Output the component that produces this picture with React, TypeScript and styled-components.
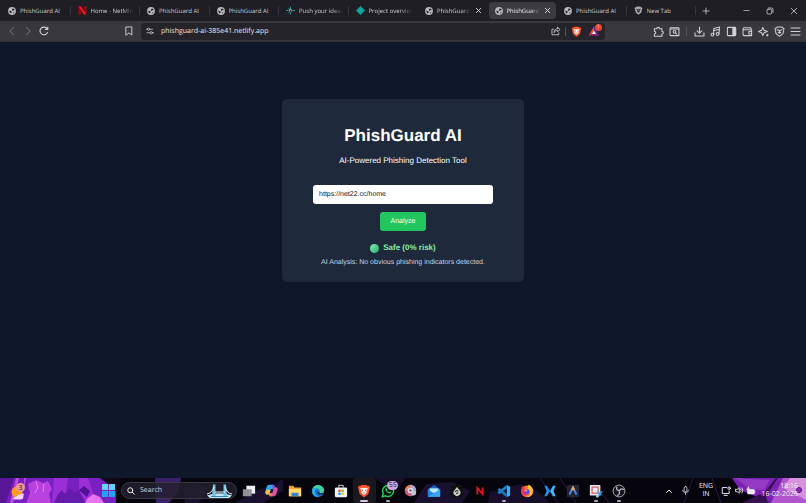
import React, { useState } from "react";
import styled, { createGlobalStyle, css } from "styled-components";

const GlobalStyle = createGlobalStyle`
  * { box-sizing: border-box; }
  html, body, #root { height: 100%; }
  body { margin: 0; background: #0f172a; overflow: hidden; text-rendering: geometricPrecision; }
  button, input { font: inherit; color: inherit; border: 0; background: none; padding: 0; margin: 0; outline: none; text-rendering: inherit; }
  svg { display: block; flex: none; }
`;

const uiFont = `"Open Sans", "Noto Sans", sans-serif`;

const Screen = styled.div`
  display: flex;
  flex-direction: column;
  min-height: 100vh;
  font-family: ${uiFont};
`;

/* ---------- tab strip ---------- */

const TabStrip = styled.header`
  display: flex;
  align-items: center;
  height: 21px;
  background: #1f1e24;
  color: #cdcdd2;
  font-size: 6px;
`;

const Tabs = styled.nav`
  flex: 1;
  min-width: 0;
  display: grid;
  grid-template-columns: repeat(10, minmax(0, 1fr));
  height: 100%;
  padding-left: 1px;
`;

const TabCell = styled.div<{ $active?: boolean; $divider?: boolean }>`
  display: flex;
  align-items: center;
  gap: 4px;
  height: 17px;
  margin: 2px 1px;
  padding: 0 5px 0 6px;
  border-radius: 4px;
  position: relative;
  ${(p) => p.$active && css`background: #3b3b41; color: #f0f0f2;`}
  ${(p) =>
    p.$divider &&
    css`
      &::after {
        content: "";
        position: absolute;
        right: -1px;
        top: 4px;
        height: 9px;
        width: 1px;
        background: #37363d;
      }
    `}
`;

const TabTitle = styled.button<{ $fade?: boolean }>`
  flex: 1;
  min-width: 0;
  overflow: hidden;
  white-space: nowrap;
  text-align: left;
  line-height: 12px;
  ${(p) => p.$fade && css`mask-image: linear-gradient(90deg, #000 72%, transparent);`}
`;

const IconButton = styled.button<{ $w?: number; $dim?: boolean }>`
  display: flex;
  align-items: center;
  justify-content: center;
  flex: none;
  width: ${(p) => p.$w ?? 16}px;
  height: 16px;
  opacity: ${(p) => (p.$dim ? 0.45 : 1)};
`;

const CloseButton = styled(IconButton)`
  width: 7px;
  color: #e6e6ea;
`;

const WindowControls = styled.div`
  display: flex;
  width: 110px;
  flex: none;
  justify-content: space-between;
  color: #d8d8dc;
`;

const ControlGroup = styled.div`
  display: flex;
`;

/* ---------- address row ---------- */

const Toolbar = styled.div`
  display: flex;
  align-items: center;
  height: 21px;
  padding: 0 3px 0 4px;
  background: #38383e;
  color: #d0d0d5;
  border-bottom: 1px solid #323339;
`;

const NavButtons = styled.div`
  display: flex;
  flex: 1 1 113px;
`;

const AddressBar = styled.form`
  display: flex;
  align-items: center;
  flex: 4 1 464px;
  height: 17px;
  padding: 0 2px;
  border-radius: 4px;
  background: #25242a;
`;

const AddressInput = styled.input`
  flex: 1;
  min-width: 0;
  margin-left: 5px;
  height: 15px;
  font-size: 7px;
  color: #e8e8ec;
`;

const Separator = styled.span<{ $gap?: number }>`
  width: 1px;
  height: 9px;
  margin: 0 ${(p) => p.$gap ?? 1}px;
  background: #55555b;
`;

const Extensions = styled.div`
  display: flex;
  align-items: center;
  justify-content: flex-end;
  flex: 1 1 198px;
`;

const BadgeHolder = styled.span`
  position: relative;
  display: flex;
`;

const AlertBadge = styled.span`
  position: absolute;
  right: -2px;
  top: -1px;
  width: 7px;
  height: 7px;
  border-radius: 50%;
  background: #f2452f;
  color: #ffd6cf;
  font-size: 5px;
  line-height: 7px;
  text-align: center;
`;

/* ---------- page ---------- */

const Page = styled.main`
  flex: 1;
  display: flex;
  justify-content: center;
  align-items: flex-start;
  padding-top: 57px;
  background: #0f172a;
  color: #fff;
  font-family: "Liberation Sans", Arial, sans-serif;
`;

const Card = styled.section`
  display: flex;
  flex-direction: column;
  align-items: center;
  width: 30%;
  min-width: 240px;
  padding: 26px 16px 13px;
  border-radius: 5px;
  background: #1e293b;
`;

const Title = styled.h1`
  margin: 0;
  font-size: 17px;
  line-height: 22px;
`;

const Subtitle = styled.p`
  margin: 8px 0 18px;
  font-size: 8px;
  line-height: 12px;
`;

const CheckForm = styled.form`
  display: flex;
  flex-direction: column;
  align-items: center;
  gap: 8px;
  width: 100%;
`;

const LinkInput = styled.input`
  box-sizing: content-box;
  width: 80%;
  height: 19px;
  padding: 0 6px;
  border-radius: 3px;
  background: #fff;
  color: #16161a;
  font-size: 7px;
`;

const AnalyzeButton = styled.button`
  height: 19px;
  padding: 0 11px;
  border-radius: 3px;
  background: #22c55e;
  color: #fff;
  font-size: 7px;
`;

const Verdict = styled.p`
  display: flex;
  align-items: center;
  gap: 4px;
  margin: 11px 0 3px;
  color: #86efac;
  font-size: 8px;
  font-weight: bold;
  line-height: 12px;
`;

const Analysis = styled.p`
  margin: 0;
  color: #cbd5e1;
  font-size: 7px;
  line-height: 12px;
  white-space: nowrap;
`;

const StatusDot = styled.span`
  width: 9px;
  height: 9px;
  border-radius: 50%;
  background: linear-gradient(135deg, #9af0bd, #4fd08c 50%, #2fa36b);
`;

/* ---------- taskbar ---------- */

const Taskbar = styled.footer`
  position: relative;
  display: flex;
  align-items: center;
  height: 25px;
  overflow: hidden;
  background: #06050d;
  color: #f0f0f5;
  font-size: 7px;
`;

const Wallpaper = styled.svg`
  position: absolute;
  inset: 0;
  width: 100%;
  height: 100%;
`;

const TaskLayer = styled.div`
  position: relative;
  flex: 1;
  display: flex;
  align-items: center;
  height: 100%;
`;

const Widgets = styled.div`
  width: 97px;
  padding-left: 8px;
`;

const SearchBox = styled.label`
  display: flex;
  align-items: center;
  gap: 5px;
  width: 116px;
  height: 17px;
  margin-left: 1px;
  padding: 0 3px 0 5px;
  border: 1px solid #3a3744;
  border-radius: 9px;
  background: #24212fcc;
`;

const SearchInput = styled.input`
  flex: 1;
  min-width: 0;
  &::placeholder { color: #d4d2dc; opacity: 1; }
`;

const Apps = styled.div`
  flex: 1;
  display: grid;
  grid-template-columns: repeat(17, minmax(0, 1fr));
  height: 100%;
`;

const AppButton = styled.button<{ $running?: boolean; $active?: boolean }>`
  position: relative;
  display: flex;
  align-items: center;
  justify-content: center;
  height: 100%;
  border-radius: 3px;
  ${(p) => p.$active && css`background: #ffffff14;`}
  ${(p) =>
    (p.$running || p.$active) &&
    css`
      &::after {
        content: "";
        position: absolute;
        bottom: 1px;
        width: ${p.$active ? 8 : 4}px;
        height: 2px;
        border-radius: 1px;
        background: ${p.$active ? "#d6bfe0" : "#a9a6b2"};
      }
    `}
`;

const CountBadge = styled.span`
  position: absolute;
  right: 1px;
  top: 3px;
  width: 11px;
  height: 9px;
  border-radius: 5px;
  background: #c9a6dd;
  color: #2a1838;
  font-size: 7px;
  line-height: 9px;
  text-align: center;
`;

const Tray = styled.div`
  display: flex;
  align-items: center;
  width: 175px;
  height: 100%;
  padding: 0 8px 0 30px;
`;

const Language = styled.button`
  width: 26px;
  line-height: 8px;
  font-size: 7px;
  text-align: center;
`;

const Clock = styled.time`
  flex: 1;
  min-width: 0;
  display: flex;
  flex-direction: column;
  align-items: flex-end;
  white-space: nowrap;
  line-height: 8px;
`;

/* ---------- icons ---------- */

type SvgProps = { size?: number; children: React.ReactNode; w?: number; box?: string };
const Line = ({ size = 10, children, w = 1.5 }: SvgProps) => (
  <svg width={size} height={size} viewBox="0 0 16 16" fill="none" stroke="currentColor" strokeWidth={w} strokeLinecap="round" strokeLinejoin="round" aria-hidden>
    {children}
  </svg>
);
const Art = ({ size = 14, children, box = "0 0 16 16" }: SvgProps) => (
  <svg width={size} height={size} viewBox={box} aria-hidden>
    {children}
  </svg>
);

const Globe = () => (
  <Art size={8}>
    <circle cx="8" cy="8" r="7.8" fill="#b9b9be" />
    <path d="M2.500 7 5 8l2 .500V11L6 13 3.500 11ZM9 3l3 .500 1.500 2.500-2.500.500-2 1.500-1.500-1.500L8.500 5ZM10.500 11l2.500-1-.7 2-1.800 1Z" fill="#26252b" />
  </Art>
);
const NetMirror = () => (
  <Art size={9}>
    <path d="M1 1h4v14l-4 1ZM11 0h4v15l-4 .4Z" fill="#a8060e" />
    <path d="M1 1h4.500L15 15.300h-4.700Z" fill="#ed1c24" />
  </Art>
);
const NetlifySpark = () => (
  <Art size={9}>
    <path d="M8 1v4M8 11v4M0 8h4M12 8h4M3.800 4l1.500 1.500M3.800 12l1.500-1.500" stroke="#2ea6a4" strokeWidth="1.500" />
    <path d="M6 10V6h3.200l1 1v3" fill="none" stroke="#a4dcd8" strokeWidth="1.500" />
  </Art>
);
const NetlifyDiamond = () => (
  <Art size={9}>
    <path d="M8 .5 15.500 8 8 15.500.5 8Z" fill="#12a59c" stroke="#12a59c" strokeLinejoin="round" />
  </Art>
);
const shieldPath = "M5 1h6l1.300 1.300 1.500-.2 1.200 2-.6 1.400L13 11.500 8 15.500 3 11.500 1.600 5.500 1 4.100l1.200-2 1.500.2Z";
const BraveGrey = () => (
  <Art size={9}>
    <path d={shieldPath} fill="#a5a5ab" />
    <path d="m4 5 2.500.6L8 5l1.500.600L12 5l-1.500 3-.3 2L8 12l-2.200-2-.3-2Z" fill="#34333a" />
    <path d="M8 6.500v2.500" stroke="#a5a5ab" />
  </Art>
);
const Brave = ({ size = 11 }: { size?: number }) => (
  <Art size={size}>
    <path d={shieldPath} fill="#fb542b" />
    <path d="M3.500 5 6.400 4.200 8 4.700l1.600-.5L12.500 5l-1.800 3.300.5 1.500L8 12.700 4.800 9.800l.5-1.500Z" fill="#fff" />
    <path d="m4.800 6 2 .7.200 1.600L6 8ZM11.200 6l-2 .7L9 8.300l1-.3ZM6.700 10 8 9.500l1.300.5L8 11Z" fill="#fb542b" />
  </Art>
);
const BatTriangle = () => (
  <Art size={12}>
    <path d="M8 2 1 14h14Z" fill="#5a2ca0" />
    <path d="M8 2 1 14l7-4.500Z" fill="#ff4724" />
    <path d="M1 14h14L8 9.500Z" fill="#9e1f63" />
    <path d="M8 7.500 5.200 12h5.600Z" fill="#fff" />
  </Art>
);
const CloseIcon = ({ size = 7 }: { size?: number }) => (
  <Line size={size} w={2}><path d="m3 3 10 10M13 3 3 13" /></Line>
);

const Puzzle = () => (
  <Line size={11}><path d="M2 4h3.500a2 2 0 1 1 4 0H13v3.500a2 2 0 1 1 0 4V15H2v-3.500a2 2 0 1 0 0-4Z" /></Line>
);
const PageSearch = () => (
  <Line size={11}><rect x="1.500" y="2.500" width="13" height="11.500" rx="1" /><path d="M2 4.500h12" /><circle cx="8" cy="8.500" r="2" /><path d="m9.500 10 2 2" /></Line>
);
const Download = () => (
  <Line size={11}><path d="M8 1.500v9M4.500 7 8 10.500 11.500 7M1.500 10v4.500h13V10" /></Line>
);
const Music = () => (
  <Line size={11}><circle cx="3.500" cy="12.500" r="2" /><circle cx="11" cy="11.500" r="2" /><path d="M5.500 12.500v-9L14 1.500l-1 10M5.500 6.500 13 5" /></Line>
);
const SidePanel = () => (
  <Line size={11}><rect x="2" y="2" width="12" height="12" rx="1" /><path d="M10 2.500h4v11h-4Z" fill="currentColor" /></Line>
);
const Wallet = () => (
  <Line size={11}><path d="M13 5V2.500H3A1.500 1.500 0 0 0 3 5.500h11V14H3a1.500 1.500 0 0 1-1.500-1.500V4M14 8h-4v3.500h4" /></Line>
);
const Sparkle = () => (
  <Line size={11}><path d="M7 2 8.800 6.200 13.500 8 8.800 9.800 7 14 5.200 9.800.8 8l4.400-1.800ZM13.500 12v2.500M12.300 13.200h2.500" /></Line>
);
const ShieldLine = () => (
  <Line size={11}><path d="M4.500 1.500h7L14.500 4 13 11 8 15 3 11 1.500 4Z" /><path d="M4.500 5.500 8 6.500l3.500-1M6 9l2 1.500L10 9M8 6.500v4" /></Line>
);
const Share = () => (
  <Line size={10} w={1.3}><path d="M4 5H1.500v9h11V11M10.500 2l4 3.500-4 3.500V7C8 7 6 8 5 10.500 5 7 7 4.300 10.500 4Z" /></Line>
);

const WindowsLogo = () => (
  <Art size={13}>
    <path d="M0 0h7.500v7.500H0ZM8.500 0H16v7.500H8.500Z" fill="#62d3f8" />
    <path d="M0 8.500h7.500V16H0ZM8.500 8.500H16V16H8.500Z" fill="#22a4ee" />
  </Art>
);
const WidgetArt = () => (
  <svg width="20" height="20" viewBox="0 0 20 20" aria-hidden>
    <circle cx="9" cy="11" r="5.500" fill="#ff9a1f" />
    <path d="M5 17.500c1-2 3-1 4-2.500 2-2 4-2 7-2.500-1 3 0 6-3 6H6Z" fill="#f0d3f5" />
    <circle cx="12.500" cy="6.500" r="4.500" fill="#f09a94" />
    <text x="12.500" y="9" fontSize="7" textAnchor="middle" fill="#401522">3</text>
  </svg>
);
const BridgeArt = () => (
  <svg width="27" height="15" viewBox="0 0 27 15" aria-hidden>
    <path d="M1 12.500Q13 8 26 12.500L23 15H4Z" fill="#bfe7f2" />
    <path d="M7 1.500h2.500V13H6ZM17.500 1.500H20l1 11.500h-3.500Z" fill="#79bfe0" />
    <path d="M1 11Q6 10 8 4M19 4q2 6.500 7 7M8.500 9h10.500" fill="none" stroke="#e4f7fc" />
    <path d="M5 13.500h17" stroke="#3c83a8" />
  </svg>
);

const TaskView = () => (
  <Art><path d="M5 2h10v9H5Z" fill="#efeff2" /><path d="M1 6h10v8H1Z" fill="#8f8f98" /></Art>
);
const Copilot = () => (
  <Art size={13}>
    <path d="M5 1h5l2 5H7L5 13H3C0 13 0 10 1 7l1-3c.500-2 1.500-3 3-3Z" fill="#28a8ea" />
    <path d="M2 7h5l-2 6H3C0 13 0 10 2 7Z" fill="#f3c53c" />
    <path d="M11 15H6L4 11h5l2-7h2c3 0 3 3 2 5l-1 3c-.500 2-1.500 3-3 3Z" fill="#d952a2" />
    <path d="M8.500 1H10c1.500 0 2 1 2.500 3H11L10 8Z" fill="#7457e0" />
    <path d="M4 11h5l-1 4H6Z" fill="#f58242" />
  </Art>
);
const Folder = () => (
  <Art><path d="M1 2h5l1.500 2H15v10H1Z" fill="#e9a52a" /><path d="M1 5.500h14V14H1Z" fill="#ffd866" /><path d="M4 10h8v4H4Z" fill="#3684d1" /></Art>
);
const Edge = () => (
  <Art>
    <circle cx="8" cy="8" r="7" fill="#1277cf" />
    <path d="M1.200 7C2 3 5 1 8 1c4 0 7 3 7 6 0 3-3 4-5.500 3 1.500-3-1-5-3.500-5-2 0-4 .8-4.800 2Z" fill="#42cfa0" />
    <path d="M1.200 7C2 5 4 4.500 6 5 4 7 4 12 9 14.900 4 15.500.6 11.500 1.200 7Z" fill="#2aa9e4" />
    <path d="M7 9c.500 2.500 3 4 6.500 2.500L15 9.500c-2 1.500-4 1.500-5.500.5C9 9.500 8 8.500 7 9Z" fill="#0b1d45" />
  </Art>
);
const Store = () => (
  <Art><path d="M5.500 4V1.500h5V4" fill="none" stroke="#dfe8f0" /><rect x="1" y="4" width="14" height="11" rx="1.500" fill="#eef3f7" /><path d="M5 6.500h2.600v2.600H5Z" fill="#f25022" /><path d="M8.400 6.500H11v2.600H8.400Z" fill="#7fba00" /><path d="M5 9.900h2.600v2.600H5Z" fill="#00a4ef" /><path d="M8.400 9.900H11v2.600H8.400Z" fill="#ffb900" /></Art>
);
const WhatsApp = () => (
  <Art><path d="m1.500 14.500 1-3.800A6.300 6.300 0 1 1 5.300 13.500Z" fill="#06130d" stroke="#2bd366" strokeWidth="1.600" /><path d="M5 5.500C5.500 4 6.500 4.500 7 6.200c-1 1 .8 3 2.300 3.100 1-1.300 2.200-.3 2.200.5C10.500 12.500 4.500 9.500 5 5.500Z" fill="#2bd366" /></Art>
);
const ColorRing = () => (
  <Art size={13}>
    <circle cx="8" cy="8" r="7" fill="#e8825c" />
    <path d="M8 1a7 7 0 0 1 7 7H8Z" fill="#a9a5dd" /><path d="M15 8a7 7 0 0 1-7 7V8Z" fill="#7a89d8" /><path d="M1 8a7 7 0 0 0 7 7V8Z" fill="#c95570" />
    <circle cx="8" cy="8" r="3.500" fill="#e6dcec" /><circle cx="8" cy="8" r="1.500" fill="#6b6296" /><circle cx="12" cy="11" r="3" fill="#c8c5d2" />
  </Art>
);
const Mail = () => (
  <Art><path d="M1 6 8 1l7 5v8H1Z" fill="#1565c8" /><path d="M3 5h10v5H3Z" fill="#b9ecff" /><path d="m1 6 7 5 7-5v8.500H1Z" fill="#2384e0" /><path d="m1 14.500 10-6L15 6v8.500Z" fill="#3ba6f0" /></Art>
);
const DarkOrb = () => (
  <Art><rect x="1" y="1" width="14" height="14" rx="3" fill="#10100f" /><path d="M8 3.500 11 7a4 4 0 1 1-6 0Z" fill="#c9c9c3" /><path d="M5.500 8.500 8 7.500l1.500 1M7 11l2.500-1" stroke="#262721" strokeWidth="1.200" fill="none" /></Art>
);
const RedN = () => (
  <Art><rect x="1" y="1" width="14" height="14" rx="2" fill="#080607" /><path d="M5 12V4.500l6 7V4" fill="none" stroke="#df1722" strokeWidth="2" /></Art>
);
const VsCode = () => (
  <Art><path d="m11 1 4 2v10l-4 2Z" fill="#38adf2" /><path d="M11 1v4L3 11.500l-2-1.200V9Z" fill="#1687d0" /><path d="M11 15v-4L3 4.500 1 5.700V7Z" fill="#1c78bd" /><path d="M11 5v6L7.300 8Z" fill="#071528" /></Art>
);
const Firefox = () => (
  <Art>
    <circle cx="8" cy="8.500" r="6.700" fill="#ff7139" />
    <path d="M10 .5c3.500 2 5.500 5 5 8.500-.500 3-3 5.500-6.500 6.200C13 12 11 7 8.500 5.500 9 3.500 9 2 10 .5Z" fill="#ffc132" />
    <path d="M1.300 7C1.500 5 2 3.500 3.500 2c.3 1.500 1 2 2.500 2.500L5 8.500l3 4C4 15 1 11 1.300 7Z" fill="#f4335a" />
    <circle cx="8" cy="8.800" r="3" fill="#7542e5" /><path d="M5 6.500c2-1.500 4 0 3.500 1.500C7 9 5 8.500 5 6.500Z" fill="#ff9640" />
  </Art>
);
const BlueX = () => (
  <Art><path d="M1.500 2h3L8 8l-3.500 6h-3L4 8Z" fill="#2587e8" /><path d="M14.500 2h-3L8 8l3.500 6h3L12 8Z" fill="#45b8f4" /></Art>
);
const Peak = () => (
  <Art><rect x="1" y="1" width="14" height="14" rx="1.500" fill="#242733" /><path d="m4 12 4-8 4 8" fill="none" stroke="#4c8df0" strokeWidth="2" /><path d="M6.500 7 8 4l1.500 3" fill="none" stroke="#f5a15a" strokeWidth="2" /></Art>
);
const Snip = () => (
  <Art><rect x="1" y="1" width="12" height="12" rx="1" fill="#ece9ee" /><rect x="3.500" y="3.500" width="7" height="7" fill="none" stroke="#c7555f" strokeWidth="1.300" /><path d="m10 8 4 5M15 8.500 10 14" stroke="#3ba1e0" strokeWidth="1.700" /><circle cx="9.500" cy="14" r="1.500" fill="#a9dafa" /></Art>
);
const Obs = () => (
  <Art><circle cx="8" cy="8" r="6.800" fill="#16151b" stroke="#bcbac4" /><path d="M8 7.500C5 7 4.500 4.500 6 3M8.500 8c1-3 3.500-3 5-1.500M8 8.500C9.500 11 8 13 5.500 13" fill="none" stroke="#bcbac4" strokeWidth="1.500" /></Art>
);

/* ---------- data ---------- */

const tabs = [
  { title: "PhishGuard AI", icon: <Globe />, divider: true },
  { title: "Home - NetMirror", icon: <NetMirror />, fade: true, divider: true },
  { title: "PhishGuard AI", icon: <Globe />, divider: true },
  { title: "PhishGuard AI", icon: <Globe />, divider: true },
  { title: "Push your ideas", icon: <NetlifySpark />, fade: true, divider: true },
  { title: "Project overview", icon: <NetlifyDiamond />, fade: true },
  { title: "PhishGuard AI", icon: <Globe />, fade: true, close: true },
  { title: "PhishGuard AI", icon: <Globe />, fade: true, close: true, active: true },
  { title: "PhishGuard AI", icon: <Globe />, divider: true },
  { title: "New Tab", icon: <BraveGrey />, divider: true },
];

const apps = [
  { name: "Task view", icon: <TaskView /> },
  { name: "Copilot", icon: <Copilot /> },
  { name: "File Explorer", icon: <Folder /> },
  { name: "Edge", icon: <Edge /> },
  { name: "Store", icon: <Store /> },
  { name: "Brave", icon: <Brave size={14} />, active: true },
  { name: "WhatsApp", icon: <WhatsApp />, running: true, count: 55 },
  { name: "Browser profile", icon: <ColorRing /> },
  { name: "Mail", icon: <Mail /> },
  { name: "Orb", icon: <DarkOrb /> },
  { name: "NetMirror", icon: <RedN /> },
  { name: "Code editor", icon: <VsCode />, running: true },
  { name: "Firefox", icon: <Firefox /> },
  { name: "Xcode tools", icon: <BlueX /> },
  { name: "Antigravity", icon: <Peak /> },
  { name: "Snipping Tool", icon: <Snip />, running: true },
  { name: "OBS", icon: <Obs />, running: true },
];

const extensions = [
  { name: "Downloads", icon: <Download /> },
  { name: "Media", icon: <Music /> },
  { name: "Side panel", icon: <SidePanel /> },
  { name: "Wallet", icon: <Wallet /> },
  { name: "Assistant", icon: <Sparkle /> },
  { name: "Shield", icon: <ShieldLine /> },
  { name: "Menu", icon: <Line size={11}><path d="M1.500 3h13M1.500 8h13M1.500 13h13" /></Line> },
];

export default function App() {
  const [url, setUrl] = useState("https://net22.cc/home");
  const [address, setAddress] = useState("phishguard-ai-385e41.netlify.app");
  const stop = (e: React.FormEvent) => e.preventDefault();

  return (
    <Screen>
      <GlobalStyle />
      <TabStrip>
        <Tabs aria-label="Tabs">
          {tabs.map((t, i) => (
            <TabCell key={i} $active={t.active} $divider={t.divider}>
              {t.icon}
              <TabTitle $fade={t.fade}>{t.title}</TabTitle>
              {t.close && <CloseButton aria-label="Close tab"><CloseIcon /></CloseButton>}
            </TabCell>
          ))}
        </Tabs>
        <WindowControls>
          <IconButton $w={20} aria-label="New tab"><Line size={8}><path d="M8 2v12M2 8h12" /></Line></IconButton>
          <ControlGroup>
            <IconButton $w={24} aria-label="Minimize"><Line size={7}><path d="M2 8h12" /></Line></IconButton>
            <IconButton $w={24} aria-label="Restore"><Line size={8}><rect x="2" y="4.500" width="9.500" height="9.500" rx="2" /><path d="M5 2h6a3 3 0 0 1 3 3v6" /></Line></IconButton>
            <IconButton $w={24} aria-label="Close window"><Line size={8}><path d="m2.500 2.500 11 11M13.500 2.500l-11 11" /></Line></IconButton>
          </ControlGroup>
        </WindowControls>
      </TabStrip>

      <Toolbar>
        <NavButtons>
          <IconButton $dim aria-label="Back"><Line size={10}><path d="M10.500 2 4.500 8l6 6" /></Line></IconButton>
          <IconButton $dim aria-label="Forward"><Line size={10}><path d="m5.500 2 6 6-6 6" /></Line></IconButton>
          <IconButton aria-label="Reload"><Line size={10} w={1.8}><path d="M13.500 10.500A6.200 6.200 0 1 1 13 4.500M14 1.500V5.500h-4" /></Line></IconButton>
        </NavButtons>
        <IconButton $w={24} aria-label="Bookmark"><Line size={10}><path d="M3.500 1.500h9v13L8 11l-4.500 3.500Z" /></Line></IconButton>
        <AddressBar onSubmit={stop}>
          <IconButton $w={13} type="button" aria-label="Site information"><Line size={8}><path d="M1 4.500h2M8 4.500h5M2 11.500h5M13 11.500h2" /><circle cx="5" cy="4.500" r="2.300" /><circle cx="10.500" cy="11.500" r="2.300" /></Line></IconButton>
          <AddressInput aria-label="Address" value={address} onChange={(e) => setAddress(e.target.value)} />
          <IconButton type="button" aria-label="Share"><Share /></IconButton>
          <Separator />
          <IconButton $w={18} type="button" aria-label="Brave Shields"><Brave /></IconButton>
          <IconButton $w={18} type="button" aria-label="Rewards">
            <BadgeHolder><BatTriangle /><AlertBadge>1</AlertBadge></BadgeHolder>
          </IconButton>
        </AddressBar>
        <Extensions>
          <IconButton aria-label="Extensions"><Puzzle /></IconButton>
          <IconButton aria-label="Find in page"><PageSearch /></IconButton>
          <Separator $gap={4} />
          {extensions.map((x) => (
            <IconButton key={x.name} aria-label={x.name}>{x.icon}</IconButton>
          ))}
        </Extensions>
      </Toolbar>

      <Page>
        <Card>
          <Title>PhishGuard AI</Title>
          <Subtitle>AI-Powered Phishing Detection Tool</Subtitle>
          <CheckForm onSubmit={stop}>
            <LinkInput aria-label="Link to check" value={url} onChange={(e) => setUrl(e.target.value)} />
            <AnalyzeButton type="submit">Analyze</AnalyzeButton>
          </CheckForm>
          <Verdict><StatusDot />Safe (0% risk)</Verdict>
          <Analysis>AI Analysis: No obvious phishing indicators detected.</Analysis>
        </Card>
      </Page>

      <Taskbar>
        <Wallpaper viewBox="0 0 806 25" preserveAspectRatio="none" aria-hidden>
          <path d="M0 0h108l8 12v13H0Z" fill="#7a1fc0" />
          <path d="M0 0h14L6 25H0Z" fill="#5a1699" />
          <path d="m16 0 3 0-6 25h-3ZM24 0h2l-2 10Z" fill="#c04be0" />
          <path d="m28 6 8-4 7 3 5-2 4 8-3 5 2 9H26l4-10Z" fill="#b942df" />
          <path d="M54 0h14l-2 14-5 11h-9ZM79 0h9l5 15-5 10h-9Z" fill="#9a2fd8" />
          <path d="m58 16 4-4 3 4 5-6 4 5 5-3 3 6 4 7H54Z" fill="#641bab" />
          <path d="m79 12 5-4 6 5-3 6Z" fill="#501295" />
          <path d="m87 21 6-5 7 3 4 6H85Z" fill="#e774ec" />
          <path d="m36 4 2 6-3 5M44 6l-1 8" stroke="#d98af0" fill="none" />
          <path d="M100 0h22l-6 14-4-5Z" fill="#100819" />
          <path d="M155 0h26l-2 12-10 13h-13Z" fill="#392069" />
          <path d="m183 10 15-4 9 6-8 13h-14ZM235 25l25-14 10-2 13-8v12l-20 12ZM414 25l12-19 26-2 18 9-8 12Z" fill="#1a1030" />
          <path d="m490 14 30-8 16 6 14 13h-62ZM375 0h30l-5 9-16-2Z" fill="#170e2c" />
          <path d="m540 0 18 25M560 0l16 25M593 4l16 21M693 0l-9 25M712 0l9 25" stroke="#2a1c48" />
          <path d="M732 0h74v25h-36l-20-9-10-4Z" fill="#7b22b4" />
          <path d="m735 0 35 2-6 10-14-1Z" fill="#9339c2" />
          <path d="m778 0-12 18 2 7h-10l6-10 12-15ZM760 16l8 9h-26Z" fill="#371052" />
          <path d="m783 0-12 25h35V0Z" fill="#b055cc" />
          <path d="m790 0-7 10 23 12V0Z" fill="#d692dc" />
          <circle cx="799" cy="12" r="2.500" fill="#8b2bb8" stroke="#55157a" />
        </Wallpaper>
        <TaskLayer>
          <Widgets><WidgetArt /></Widgets>
          <IconButton $w={23} aria-label="Start"><WindowsLogo /></IconButton>
          <SearchBox>
            <Line size={8} w={2}><circle cx="6.500" cy="6.500" r="5" /><path d="m10.500 10.500 4 4" /></Line>
            <SearchInput aria-label="Search" placeholder="Search" />
            <BridgeArt />
          </SearchBox>
          <Apps>
            {apps.map((a) => (
              <AppButton key={a.name} aria-label={a.name} $active={a.active} $running={a.running}>
                {a.icon}
                {a.count && <CountBadge>{a.count}</CountBadge>}
              </AppButton>
            ))}
          </Apps>
          <Tray>
            <IconButton aria-label="Hidden icons"><Line size={8} w={2}><path d="m3 11 5-5 5 5" /></Line></IconButton>
            <IconButton aria-label="Microphone"><Line size={9} w={1.3}><rect x="5.500" y="1" width="5" height="9" rx="2.500" /><path d="M3 7.500c0 6 10 6 10 0M8 12v3" /></Line></IconButton>
            <Language>ENG<br />IN</Language>
            <IconButton $w={14} aria-label="Network"><Line size={10}><path d="M9 2.500H2v9.500h11V8M5 15h5" /><circle cx="13" cy="3.500" r="2" /></Line></IconButton>
            <IconButton $w={12} aria-label="Volume"><Line size={9}><path d="M1 6v4h3l3.500 3V3L4 6ZM10 5.500q2 2.500 0 5M12.500 3.500q3.500 4.500 0 9" /></Line></IconButton>
            <IconButton $w={12} aria-label="Battery"><Art size={10}><rect x="2" y="5" width="12" height="8" rx="2" fill="#f3e8f8" /><path d="M14.500 7.500v3M4 1 1 6h3L3 10l4-5H4.500Z" fill="#f3e8f8" stroke="#f3e8f8" /></Art></IconButton>
            <Clock><span>18:16</span><span>16-02-2026</span></Clock>
          </Tray>
        </TaskLayer>
      </Taskbar>
    </Screen>
  );
}
